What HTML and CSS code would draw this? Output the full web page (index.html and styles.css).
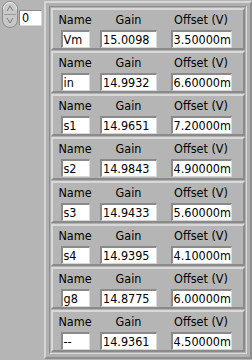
FILE: index.html
```html
<!DOCTYPE html>
<html>
<head>
<meta charset="utf-8">
<link rel="stylesheet" href="styles.css">
</head>
<body>
<div class="page">
  <div class="index">
    <div class="spin">
      <svg width="16" height="27" viewBox="0 0 16 27">
        <rect x="0.5" y="0.5" width="15" height="26" rx="7.5" fill="#c8c8c8" stroke="#8a8a8a"/>
        <path d="M1.5 8 A6.5 6.5 0 0 1 14.5 8" fill="none" stroke="#eeeeee"/>
        <line x1="2" y1="13.5" x2="14" y2="13.5" stroke="#9a9a9a"/>
        <path d="M5 10 L8 5 L11 10" fill="none" stroke="#7a7a7a"/>
        <path d="M5 17 L8 22 L11 17" fill="none" stroke="#7a7a7a"/>
      </svg>
    </div>
    <div class="idxbox">0</div>
  </div>
  <div class="array">
    <div class="elements">
      <div class="cluster"><div class="col c1"><span class="lbl">Name</span><div class="box">Vm</div></div><div class="col c2"><span class="lbl">Gain</span><div class="box">15.0098</div></div><div class="col c3"><span class="lbl">Offset (V)</span><div class="box">3.50000m</div></div></div>
      <div class="cluster"><div class="col c1"><span class="lbl">Name</span><div class="box">in</div></div><div class="col c2"><span class="lbl">Gain</span><div class="box">14.9932</div></div><div class="col c3"><span class="lbl">Offset (V)</span><div class="box">6.60000m</div></div></div>
      <div class="cluster"><div class="col c1"><span class="lbl">Name</span><div class="box">s1</div></div><div class="col c2"><span class="lbl">Gain</span><div class="box">14.9651</div></div><div class="col c3"><span class="lbl">Offset (V)</span><div class="box">7.20000m</div></div></div>
      <div class="cluster"><div class="col c1"><span class="lbl">Name</span><div class="box">s2</div></div><div class="col c2"><span class="lbl">Gain</span><div class="box">14.9843</div></div><div class="col c3"><span class="lbl">Offset (V)</span><div class="box">4.90000m</div></div></div>
      <div class="cluster"><div class="col c1"><span class="lbl">Name</span><div class="box">s3</div></div><div class="col c2"><span class="lbl">Gain</span><div class="box">14.9433</div></div><div class="col c3"><span class="lbl">Offset (V)</span><div class="box">5.60000m</div></div></div>
      <div class="cluster"><div class="col c1"><span class="lbl">Name</span><div class="box">s4</div></div><div class="col c2"><span class="lbl">Gain</span><div class="box">14.9395</div></div><div class="col c3"><span class="lbl">Offset (V)</span><div class="box">4.10000m</div></div></div>
      <div class="cluster"><div class="col c1"><span class="lbl">Name</span><div class="box">g8</div></div><div class="col c2"><span class="lbl">Gain</span><div class="box">14.8775</div></div><div class="col c3"><span class="lbl">Offset (V)</span><div class="box">6.00000m</div></div></div>
      <div class="cluster"><div class="col c1"><span class="lbl">Name</span><div class="box">--</div></div><div class="col c2"><span class="lbl">Gain</span><div class="box">14.9361</div></div><div class="col c3"><span class="lbl">Offset (V)</span><div class="box">4.50000m</div></div></div>
    </div>
  </div>
</div>
</body>
</html>
```

FILE: styles.css
```css
html, body {
  margin: 0;
  padding: 0;
  background: #b5b5b5;
}
body {
  width: 252px;
  height: 360px;
  overflow: hidden;
  font-family: "DejaVu Sans Condensed", "DejaVu Sans", sans-serif;
  font-stretch: semi-condensed;
  font-size: 12.5px;
  color: #000;
}
.page {
  display: flex;
  align-items: flex-start;
  padding: 1px 0 0 2px;
  height: 359px;
}
.index {
  display: flex;
  align-items: flex-start;
  gap: 1px;
}
.spin {
  width: 16px;
  height: 27px;
}
.spin svg { display: block; }
.idxbox {
  margin-top: 9px;
  width: 19px;
  height: 14px;
  background: #ffffff;
  border-top: 1px solid #8a8a8a;
  border-left: 1px solid #8a8a8a;
  border-bottom: 1px solid #d8d8d8;
  border-right: 1px solid #d8d8d8;
  padding-left: 2px;
  line-height: 14px;
}
.array {
  margin-left: 2px;
  width: 209px;
  height: 358px;
  box-sizing: border-box;
  border-top: 2px solid #d6d6d6;
  border-left: 2px solid #d6d6d6;
  border-bottom: 2px solid #8e8e8e;
  border-right: 2px solid #8e8e8e;
  padding: 3px;
  background: #b0b0b0;
}
.elements {
  box-sizing: border-box;
  height: 100%;
  border-top: 1px solid #8e8e8e;
  border-left: 1px solid #8e8e8e;
  border-bottom: 1px solid #dadada;
  border-right: 1px solid #dadada;
  display: grid;
  grid-template-rows: repeat(8, 1fr);
  gap: 1px;
  padding: 1px;
}
.cluster {
  box-sizing: border-box;
  border-top: 2px solid #d8d8d8;
  border-left: 2px solid #d8d8d8;
  border-bottom: 2px solid #8a8a8a;
  border-right: 2px solid #8a8a8a;
  background: #b5b5b5;
  display: flex;
  padding: 3px 0 0 4px;
}
.col {
  display: flex;
  flex-direction: column;
  align-items: center;
}
.c1 { width: 36px; }
.c2 { width: 71px; }
.c3 { width: 74px; }
.lbl {
  line-height: 14px;
  height: 17px;
  white-space: nowrap;
}
.box {
  box-sizing: border-box;
  height: 18px;
  background: #fff;
  border-top: 2px solid #8a8a8a;
  border-left: 2px solid #8a8a8a;
  border-bottom: 1px solid #d8d8d8;
  border-right: 1px solid #d8d8d8;
  line-height: 15px;
  padding-left: 1px;
  white-space: nowrap;
  overflow: hidden;
}
.c1 .box { width: 29px; }
.c2 .box { width: 57px; }
.c3 .box { width: 61px; }
```
